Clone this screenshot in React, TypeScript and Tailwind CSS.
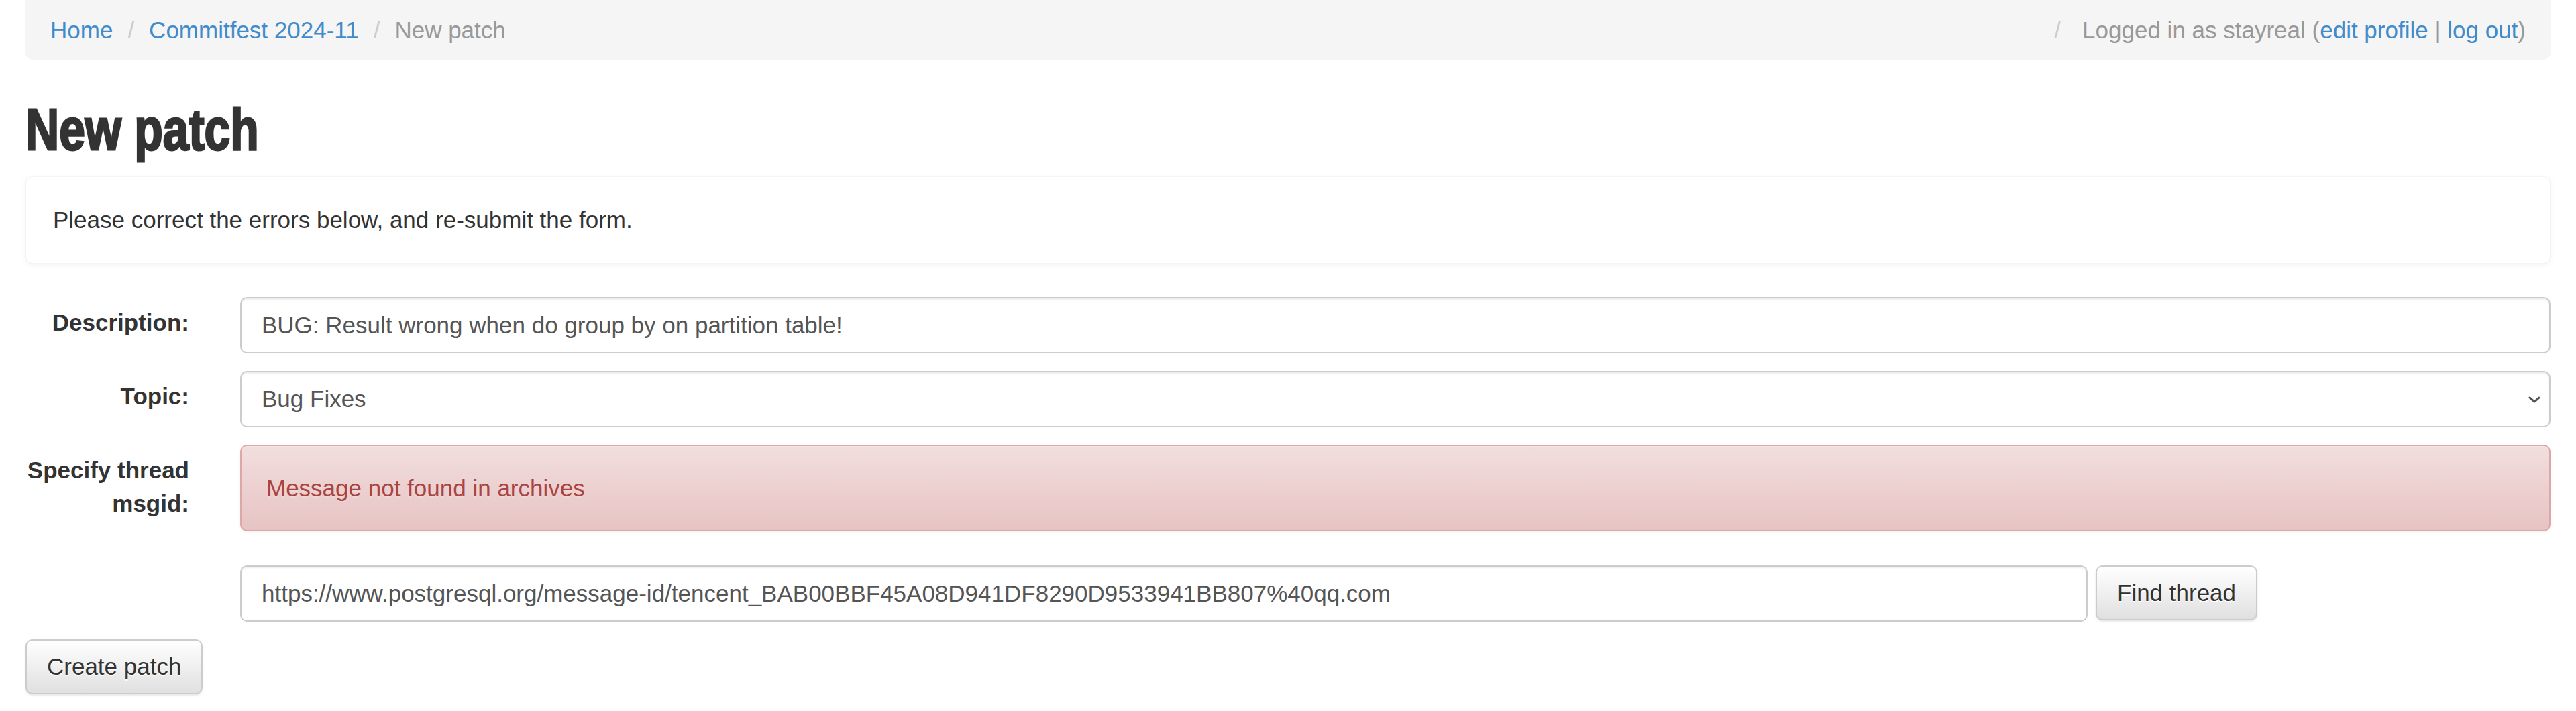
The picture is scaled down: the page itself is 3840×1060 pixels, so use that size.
import React from "react";

const crumbs = [
  { label: "Home", href: "#" },
  { label: "Commitfest 2024-11", href: "#" },
];

function Label({ children }: { children: React.ReactNode }) {
  return (
    <div className="w-[244px] shrink-0 pt-[13px] text-right font-bold text-[#333]">
      {children}
    </div>
  );
}

export default function App() {
  return (
    <div className="min-h-screen w-[3840px] bg-white px-[38px] font-['Liberation_Sans',Arial,sans-serif] text-[35px] leading-[50px] text-[#333]">
      {/* breadcrumb */}
      <div className="flex h-[89px] items-center rounded-b-[10px] bg-[#f5f5f5] px-[37px]">
        {crumbs.map((c) => (
          <React.Fragment key={c.label}>
            <a href={c.href} className="text-[#428bca]">
              {c.label}
            </a>
            <span className="mx-[22px] text-[#ccc]">/</span>
          </React.Fragment>
        ))}
        <span className="text-[#999]">New patch</span>

        <div className="ml-auto flex items-center text-[#999]">
          <span className="mr-[32px] text-[#ccc]">/</span>
          <span>
            Logged in as stayreal (
            <a href="#" className="text-[#428bca]">
              edit profile
            </a>{" "}
            |{" "}
            <a href="#" className="text-[#428bca]">
              log out
            </a>
            )
          </span>
        </div>
      </div>

      {/* title */}
      <h1 className="mt-[54px] mb-[21px] h-[99px] text-[88px] leading-[99px] font-bold text-[#333]">
        <span className="inline-block origin-left scale-x-[0.79] [-webkit-text-stroke:3px_#333]">
          New patch
        </span>
      </h1>

      {/* notice */}
      <div className="flex h-[130px] items-center rounded-[10px] border border-[#f4f4f4] bg-white pl-[40px] shadow-[0_2px_8px_rgba(0,0,0,0.05)]">
        Please correct the errors below, and re-submit the form.
      </div>

      {/* form */}
      <form className="mt-[50px] flex flex-col" onSubmit={(e) => e.preventDefault()}>
        <div className="flex gap-[76px]">
          <Label>Description:</Label>
          <input
            defaultValue="BUG: Result wrong when do group by on partition table!"
            className="h-[84px] flex-1 rounded-[10px] border-2 border-[#ccc] bg-white px-[30px] text-[#555] shadow-[inset_0_2px_2px_rgba(0,0,0,0.075)] outline-none"
          />
        </div>

        <div className="mt-[26px] flex gap-[76px]">
          <Label>Topic:</Label>
          <div className="relative flex-1">
            <select
              defaultValue="bug"
              className="h-[84px] w-full appearance-none rounded-[10px] border-2 border-[#ccc] bg-white px-[30px] text-[#555] shadow-[inset_0_2px_2px_rgba(0,0,0,0.075)] outline-none"
            >
              <option value="bug">Bug Fixes</option>
            </select>
            <svg
              className="pointer-events-none absolute right-[15px] top-[38px] h-[10px] w-[18px]"
              viewBox="0 0 18 10"
              fill="none"
              stroke="#555"
              strokeWidth="3"
              strokeLinecap="round"
              strokeLinejoin="round"
            >
              <path d="M2 2l7 6 7-6" />
            </svg>
          </div>
        </div>

        <div className="mt-[26px] flex gap-[76px]">
          <Label>
            Specify thread
            <br />
            msgid:
          </Label>
          <div className="flex-1">
            <div className="flex h-[129px] items-center rounded-[10px] border-2 border-[#dca7a7] bg-gradient-to-b from-[#f2dede] to-[#e7c3c3] pl-[37px] text-[#a94442] shadow-[inset_0_2px_0_rgba(255,255,255,0.25),0_2px_5px_rgba(0,0,0,0.05)] [text-shadow:0_2px_0_rgba(255,255,255,0.2)]">
              Message not found in archives
            </div>
            <div className="mt-[51px] flex items-start">
              <input
                defaultValue="https://www.postgresql.org/message-id/tencent_BAB00BBF45A08D941DF8290D9533941BB807%40qq.com"
                className="h-[84px] w-[2754px] rounded-[10px] border-2 border-[#ccc] bg-white px-[30px] text-[#555] shadow-[inset_0_2px_2px_rgba(0,0,0,0.075)] outline-none"
              />
              <button
                type="button"
                className="ml-[12px] h-[82px] rounded-[10px] border-2 border-[#ccc] bg-gradient-to-b from-white to-[#e0e0e0] px-[30px] text-[#333] shadow-[0_2px_3px_rgba(0,0,0,0.1)] [text-shadow:0_2px_0_#fff]"
              >
                Find thread
              </button>
            </div>
          </div>
        </div>

        <div className="mt-[26px]">
          <button
            type="submit"
            className="h-[82px] rounded-[10px] border-2 border-[#ccc] bg-gradient-to-b from-white to-[#e0e0e0] px-[30px] text-[#333] shadow-[0_2px_3px_rgba(0,0,0,0.1)] [text-shadow:0_2px_0_#fff]"
          >
            Create patch
          </button>
        </div>
      </form>
    </div>
  );
}
